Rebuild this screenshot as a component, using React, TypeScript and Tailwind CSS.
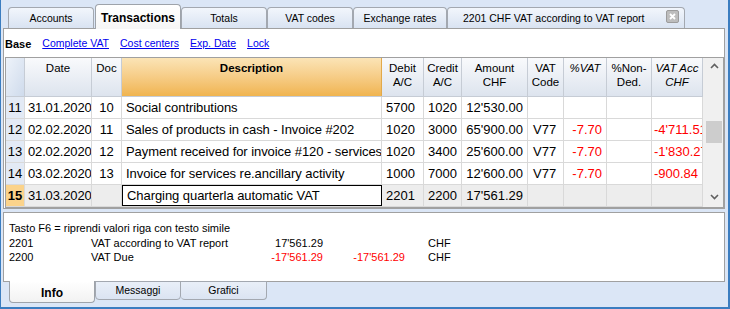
import type { ReactNode } from "react";

type Row = {
  n: string;
  date: string;
  doc: string;
  desc: string;
  debit: string;
  credit: string;
  amount: string;
  vat: string;
  pct: string;
  nonDed: string;
  vatAcc: string;
};

const rows: Row[] = [
  { n: "11", date: "31.01.2020", doc: "10", desc: "Social contributions", debit: "5700", credit: "1020", amount: "12'530.00", vat: "", pct: "", nonDed: "", vatAcc: "" },
  { n: "12", date: "02.02.2020", doc: "11", desc: "Sales of products in cash - Invoice #202", debit: "1020", credit: "3000", amount: "65'900.00", vat: "V77", pct: "-7.70", nonDed: "", vatAcc: "-4'711.51" },
  { n: "13", date: "02.02.2020", doc: "12", desc: "Payment received for invoice #120 - services", debit: "1020", credit: "3400", amount: "25'600.00", vat: "V77", pct: "-7.70", nonDed: "", vatAcc: "-1'830.27" },
  { n: "14", date: "03.02.2020", doc: "13", desc: "Invoice for services re.ancillary activity", debit: "1000", credit: "7000", amount: "12'600.00", vat: "V77", pct: "-7.70", nonDed: "", vatAcc: "-900.84" },
  { n: "15", date: "31.03.2020", doc: "", desc: "Charging quarterla automatic VAT", debit: "2201", credit: "2200", amount: "17'561.29", vat: "", pct: "", nonDed: "", vatAcc: "" },
];

const cols = "grid grid-cols-[19px_67px_30px_260px_42px_38px_66px_36px_43px_45px_51px]";

function TopTab({ label, width, active }: { label: string; width: string; active?: boolean }) {
  if (active) {
    return (
      <div className={`${width} relative z-10 -mb-px flex h-[25px] items-start justify-center rounded-t-[4px] border border-b-0 border-[#9ea3aa] bg-gradient-to-b from-white to-[#f6f6f6] pt-[4px] text-[12px] font-bold text-black`}>
        {label}
      </div>
    );
  }
  return (
    <div className={`${width} flex h-[21px] items-center justify-center rounded-t-[4px] border border-b-0 border-[#a3a8b0] bg-gradient-to-b from-[#f2f6fc] to-[#d9e3f2] pt-[1px] text-[10.5px] text-black`}>
      {label}
    </div>
  );
}

function HeadCell({ children, className = "" }: { children?: ReactNode; className?: string }) {
  return (
    <div className={`border-r border-[#c6ccd5] bg-gradient-to-b from-[#f9fafc] to-[#dde4ee] pt-[3px] text-center text-[11.5px] leading-[14px] ${className}`}>
      {children}
    </div>
  );
}

function Cell({ children, className = "" }: { children?: ReactNode; className?: string }) {
  return (
    <div className={`flex items-center overflow-hidden whitespace-nowrap border-r border-[#d9d9d9] px-[4px] text-[13px] ${className}`}>
      {children}
    </div>
  );
}

function Chevron({ up }: { up?: boolean }) {
  return (
    <svg width="9" height="6" viewBox="0 0 9 6" className="block">
      <polyline
        points={up ? "1,5 4.5,1.5 8,5" : "1,1 4.5,4.5 8,1"}
        fill="none"
        stroke="#606060"
        strokeWidth="1.6"
      />
    </svg>
  );
}

export default function App() {
  return (
    <div className="flex h-[309px] w-[730px] flex-col border-b-2 border-l border-r-2 border-[#3b7dc0] bg-[#dbe6f6] font-['Liberation_Sans',Arial,sans-serif] text-black">
      {/* top tabs */}
      <div className="flex h-[28px] items-end pl-[7px]">
        <TopTab label="Accounts" width="w-[86px]" />
        <div className="w-[1px]" />
        <TopTab label="Transactions" width="w-[86px]" active />
        <TopTab label="Totals" width="w-[86px]" />
        <TopTab label="VAT codes" width="w-[86px]" />
        <TopTab label="Exchange rates" width="w-[94px]" />
        <div className="relative flex h-[21px] w-[238px] items-center rounded-t-[4px] border border-b-0 border-[#a3a8b0] bg-gradient-to-b from-[#f2f6fc] to-[#d9e3f2] pl-[15px] pt-[1px] text-[10.5px]">
          2201 CHF VAT according to VAT report
          <div className="absolute right-[5px] top-[2px] flex h-[13px] w-[13px] items-center justify-center rounded-[2px] border border-[#9c9c9c] bg-[#bdbdbd]">
            <svg width="7" height="7" viewBox="0 0 7 7">
              <path d="M1 1 L6 6 M6 1 L1 6" stroke="white" strokeWidth="1.8" />
            </svg>
          </div>
        </div>
      </div>

      {/* main panel */}
      <div className="ml-[2px] mr-[3px] flex h-[181px] flex-col border border-[#a0a0a0] bg-white">
        <div className="flex h-[28px] items-center gap-[11px] pl-[1px] pt-[2px] text-[10.5px]">
          <span className="text-[11px] font-bold">Base</span>
          <span className="text-[#0000ee] underline">Complete VAT</span>
          <span className="text-[#0000ee] underline">Cost centers</span>
          <span className="text-[#0000ee] underline">Exp. Date</span>
          <span className="text-[#0000ee] underline">Lock</span>
        </div>

        <div className="ml-[1px] flex h-[151px] w-[719px] border border-[#a0a0a0]">
          <div className="flex w-[697px] flex-col">
            <div className={`${cols} h-[39px] border-b border-[#c6ccd5]`}>
              <div className="border-r border-[#c6ccd5] bg-gradient-to-br from-[#eef3fa] to-[#cfdbec]" />
              <HeadCell>Date</HeadCell>
              <HeadCell>Doc</HeadCell>
              <HeadCell className="border-[#e2a94a] !from-[#fbe4b6] !to-[#f0b44e] font-bold">Description</HeadCell>
              <HeadCell>Debit<br />A/C</HeadCell>
              <HeadCell>Credit<br />A/C</HeadCell>
              <HeadCell>Amount<br />CHF</HeadCell>
              <HeadCell>VAT<br />Code</HeadCell>
              <HeadCell className="italic">%VAT</HeadCell>
              <HeadCell>%Non-<br />Ded.</HeadCell>
              <HeadCell className="italic">VAT Acc<br />CHF</HeadCell>
            </div>
            {rows.map((r) => {
              const cur = r.n === "15";
              const wide = r.vatAcc.length > 7;
              return (
                <div
                  key={r.n}
                  className={`${cols} h-[22px] border-b border-[#d9d9d9] ${cur ? "bg-[#ededed]" : "bg-white"}`}
                >
                  <Cell className={`justify-center px-0 ${cur ? "bg-[#fbd38b] font-bold" : "bg-[#e3eaf5]"}`}>{r.n}</Cell>
                  <Cell className="pl-[3px] pr-0 tracking-[-0.15px]">{r.date}</Cell>
                  <Cell className="justify-center px-0">{r.doc}</Cell>
                  <Cell className={`pr-0 tracking-[-0.06px] ${cur ? "border border-black bg-white" : ""}`}>{r.desc}</Cell>
                  <Cell>{r.debit}</Cell>
                  <Cell>{r.credit}</Cell>
                  <Cell className="justify-end">{r.amount}</Cell>
                  <Cell className="pl-[5px]">{r.vat}</Cell>
                  <Cell className="justify-end text-[#ff0000]">{r.pct}</Cell>
                  <Cell>{r.nonDed}</Cell>
                  <Cell className={`text-[#ff0000] ${wide ? "justify-start pl-[2px] pr-0" : "justify-end"}`}>{r.vatAcc}</Cell>
                </div>
              );
            })}
          </div>
          {/* scrollbar */}
          <div className="flex w-[20px] flex-col items-center bg-[#f0f0f0] pl-[2px]">
            <div className="mt-[5px] h-[6px]">
              <Chevron up />
            </div>
            <div className="mt-[52px] h-[22px] w-[16px] bg-[#cdcdcd]" />
            <div className="flex-1" />
            <div className="mb-[7px] h-[6px]">
              <Chevron />
            </div>
          </div>
        </div>
      </div>

      {/* info panel */}
      <div className="ml-[2px] mr-[3px] mt-[3px] h-[70px] border border-[#a0a0a0] bg-white pl-[5px] pt-[8px] text-[11px] leading-[14.5px]">
        <div>Tasto F6 = riprendi valori riga con testo simile</div>
        <div className="grid grid-cols-[82px_150px_82px_82px_auto]">
          <span>2201</span>
          <span>VAT according to VAT report</span>
          <span className="text-right">17'561.29</span>
          <span />
          <span className="pl-[23px]">CHF</span>
          <span>2200</span>
          <span>VAT Due</span>
          <span className="text-right text-[#ff0000]">-17'561.29</span>
          <span className="text-right text-[#ff0000]">-17'561.29</span>
          <span className="pl-[23px]">CHF</span>
        </div>
      </div>

      {/* bottom tabs */}
      <div className="-mt-px flex items-start pl-[8px]">
        <div className="relative z-10 flex h-[22px] w-[86px] items-center justify-center rounded-b-[4px] border border-t-0 border-[#9ea3aa] bg-gradient-to-b from-white to-[#f2f2f2] pt-[3px] text-[12px] font-bold">
          Info
        </div>
        <div className="flex h-[19px] w-[86px] items-center justify-center rounded-b-[4px] border border-[#a3a8b0] bg-gradient-to-b from-[#e9eff8] to-[#dbe4f2] text-[10.5px]">
          Messaggi
        </div>
        <div className="flex h-[19px] w-[86px] items-center justify-center rounded-b-[4px] border border-l-0 border-[#a3a8b0] bg-gradient-to-b from-[#e9eff8] to-[#dbe4f2] text-[10.5px]">
          Grafici
        </div>
      </div>
    </div>
  );
}
